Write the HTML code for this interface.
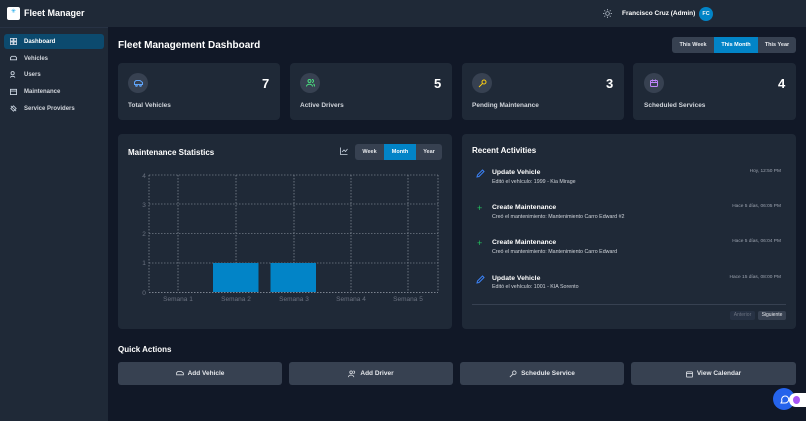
<!DOCTYPE html>
<html><head><meta charset="utf-8"><style>
*{box-sizing:border-box;margin:0;padding:0}
body{width:806px;height:421px;overflow:hidden;background:#111827;font-family:"Liberation Sans",sans-serif;color:#f3f4f6;position:relative}
.a{position:absolute}
.side{left:0;top:0;width:108px;height:421px;background:#1f2937}
.top{left:108px;top:0;width:698px;height:27px;background:#1f2937}
.nav{left:4px;width:100px;height:15px;font-size:6px;font-weight:bold;color:#d1d5db;display:flex;align-items:center;padding-left:6px;border-radius:3px}
.nav svg{margin-right:7px}
.card{background:#1f2937;border-radius:4px}
.ic{width:20px;height:20px;border-radius:50%;background:#374151;display:flex;align-items:center;justify-content:center}
.num{font-size:13px;font-weight:bold;color:#fff}
.lab{font-size:6.5px;font-weight:bold;color:#d1d5db}
.seg{display:flex;border-radius:3px;overflow:hidden;background:#374151;font-size:5.5px;font-weight:bold;color:#e5e7eb}
.seg div{display:flex;align-items:center;justify-content:center}
.seg .on{background:#0284c7;color:#fff}
.btn{top:362px;width:164px;height:23px;background:#374151;border-radius:3px;display:flex;align-items:center;justify-content:center;font-size:6.5px;font-weight:bold;color:#e5e7eb}
.btn svg{margin-right:4px}
.act-t{font-size:6.8px;font-weight:bold;color:#fff}
.act-d{font-size:5.3px;color:#d1d5db}
.tm{font-size:4.8px;color:#9ca3af;text-align:right;width:120px}
</style></head><body>
<div class="a side"></div>
<div class="a top"></div>
<div class="a" style="left:7px;top:7px;width:13px;height:13px;background:#fff;border-radius:2px"><div style="margin:3px 4px;width:5px;height:5px;color:#0ea5e9;font-size:6px;line-height:5px">✳</div></div>
<div class="a" style="left:24px;top:8px;font-size:9px;font-weight:bold;color:#fff">Fleet Manager</div>
<div class="a" style="left:0;top:27px;width:108px;height:1px;background:#273244"></div>
<div class="a nav" style="top:34px;background:#0c4a6e;color:#fff"><svg width="7" height="7" viewBox="0 0 8 8" fill="none" stroke="#cbd5e1" stroke-width="1"><rect x=".5" y=".5" width="3" height="3"/><rect x="4.5" y=".5" width="3" height="3"/><rect x=".5" y="4.5" width="3" height="3"/><rect x="4.5" y="4.5" width="3" height="3"/></svg>Dashboard</div>
<div class="a nav" style="top:51px"><svg width="7" height="7" viewBox="0 0 8 8" fill="none" stroke="#cbd5e1"><path d="M.5 5.5V3l1.5-1.5h4L7.5 3v2.5z"/></svg>Vehicles</div>
<div class="a nav" style="top:67px"><svg width="7" height="7" viewBox="0 0 8 8" fill="none" stroke="#cbd5e1"><circle cx="3" cy="2.5" r="1.8"/><path d="M.5 7.5c0-2 5-2 5 0"/></svg>Users</div>
<div class="a nav" style="top:84px"><svg width="7" height="7" viewBox="0 0 8 8" fill="none" stroke="#cbd5e1"><rect x=".5" y="1.5" width="7" height="6"/><path d="M.5 3.5h7"/></svg>Maintenance</div>
<div class="a nav" style="top:101px"><svg width="7" height="7" viewBox="0 0 8 8" fill="none" stroke="#cbd5e1"><path d="M1 1l6 6M1 4l3-3 3 3-3 3z"/></svg>Service Providers</div>

<svg class="a" style="left:603px;top:9px" width="9" height="9" viewBox="0 0 10 10" fill="none" stroke="#cbd5e1" stroke-width=".8"><circle cx="5" cy="5" r="2"/><path d="M5 0v1.5M5 8.5V10M0 5h1.5M8.5 5H10M1.5 1.5l1 1M7.5 7.5l1 1M1.5 8.5l1-1M7.5 2.5l1-1"/></svg>
<div class="a" style="left:622px;top:10px;font-size:6.5px;font-weight:bold;color:#fff">Francisco Cruz (Admin)</div>
<div class="a" style="left:699px;top:7px;width:14px;height:14px;border-radius:50%;background:#0284c7;font-size:5.5px;font-weight:bold;display:flex;align-items:center;justify-content:center">FC</div>

<div class="a" style="left:118px;top:40px;font-size:10px;font-weight:bold;color:#fff">Fleet Management Dashboard</div>
<div class="a seg" style="left:672px;top:37px;height:16px;width:124px"><div style="width:42px">This Week</div><div class="on" style="width:44px">This Month</div><div style="width:38px">This Year</div></div>

<div class="a card" style="left:118px;top:63px;width:162px;height:57px"></div>
<div class="a card" style="left:290px;top:63px;width:162px;height:57px"></div>
<div class="a card" style="left:462px;top:63px;width:162px;height:57px"></div>
<div class="a card" style="left:633px;top:63px;width:163px;height:57px"></div>
<div class="a ic" style="left:128px;top:73px"><svg width="9" height="7" viewBox="0 0 9 7" fill="none" stroke="#60a5fa"><path d="M.5 4.5V2l1.5-1.5h4L8.5 2.5v2z"/><circle cx="2.5" cy="5.5" r=".8"/><circle cx="6.5" cy="5.5" r=".8"/></svg></div>
<div class="a ic" style="left:300px;top:73px"><svg width="9" height="8" viewBox="0 0 9 8" fill="none" stroke="#4ade80"><circle cx="3.5" cy="2" r="1.5"/><path d="M.5 7.5c0-3 6-3 6 0M6 .5a1.5 1.5 0 010 3M7.5 5c1 .5 1 1.5 1 2.5"/></svg></div>
<div class="a ic" style="left:472px;top:73px"><svg width="9" height="9" viewBox="0 0 9 9" fill="none" stroke="#facc15"><circle cx="6" cy="3" r="2"/><path d="M4.5 4.5L1 8"/></svg></div>
<div class="a ic" style="left:644px;top:73px"><svg width="8" height="8" viewBox="0 0 8 8" fill="none" stroke="#c084fc"><rect x=".5" y="1.5" width="7" height="6" rx="1"/><path d="M.5 3.5h7M2.5.5v2M5.5.5v2"/></svg></div>
<div class="a num" style="left:262px;top:76px">7</div>
<div class="a num" style="left:434px;top:76px">5</div>
<div class="a num" style="left:606px;top:76px">3</div>
<div class="a num" style="left:778px;top:76px">4</div>
<div class="a lab" style="left:128px;top:102px">Total Vehicles</div>
<div class="a lab" style="left:300px;top:102px">Active Drivers</div>
<div class="a lab" style="left:472px;top:102px">Pending Maintenance</div>
<div class="a lab" style="left:644px;top:102px">Scheduled Services</div>

<div class="a card" style="left:118px;top:134px;width:334px;height:195px"></div>
<div class="a" style="left:128px;top:148px;font-size:8px;font-weight:bold;color:#fff">Maintenance Statistics</div>
<svg class="a" style="left:340px;top:147px" width="8" height="8" viewBox="0 0 8 8" fill="none" stroke="#cbd5e1" stroke-width=".8"><path d="M.5 .5v7h7M2 5l2-2 1.5 1.5L7.5 2"/></svg>
<div class="a seg" style="left:355px;top:144px;height:16px;width:87px"><div style="width:29px">Week</div><div class="on" style="width:32px">Month</div><div style="width:26px">Year</div></div>
<svg class="a" style="left:118px;top:134px" width="334" height="195">
<g stroke="#9ca3af" stroke-width=".6" stroke-dasharray="1.5 1.5" fill="none">
<path d="M31 41H320M31 70H320M31 99.5H320M31 129H320M31 41V158M60 41V158M118 41V158M176 41V158M233 41V158M290 41V158M320 41V158"/>
</g>
<path d="M31 158.5H320" stroke="#9ca3af" stroke-width=".8" stroke-dasharray="1.5 1.5"/>
<rect x="95" y="129" width="45.5" height="29" fill="#0284c7"/>
<rect x="152.5" y="129" width="45.5" height="29" fill="#0284c7"/>
<g fill="#6b7280" font-family="Liberation Sans" font-size="6.5" text-anchor="middle">
<text x="26" y="44">4</text><text x="26" y="73">3</text><text x="26" y="102">2</text><text x="26" y="131">1</text><text x="26" y="161">0</text>
<text x="60" y="167">Semana 1</text><text x="118" y="167">Semana 2</text><text x="176" y="167">Semana 3</text><text x="233" y="167">Semana 4</text><text x="290" y="167">Semana 5</text>
</g></svg>

<div class="a card" style="left:462px;top:134px;width:334px;height:195px"></div>
<div class="a" style="left:472px;top:146px;font-size:8px;font-weight:bold;color:#fff">Recent Activities</div>
<svg class="a" style="left:476px;top:169px" width="9" height="9" viewBox="0 0 9 9" fill="none" stroke="#3b82f6" stroke-width="1"><path d="M1 8l.5-2L6.5 1l1.5 1.5L3 7.5z"/></svg>
<div class="a act-t" style="left:492px;top:169px">Update Vehicle</div>
<div class="a act-d" style="left:492px;top:179px">Editó el vehículo: 1999 - Kia Mirage</div>
<div class="a tm" style="left:661px;top:169px">Hoy, 12:50 PM</div>
<div class="a" style="left:477px;top:203px;font-size:9px;color:#22c55e">+</div>
<div class="a act-t" style="left:492px;top:204px">Create Maintenance</div>
<div class="a act-d" style="left:492px;top:214px">Creó el mantenimiento: Mantenimiento Carro Edward #2</div>
<div class="a tm" style="left:661px;top:204px">Hace 5 días, 06:05 PM</div>
<div class="a" style="left:477px;top:238px;font-size:9px;color:#22c55e">+</div>
<div class="a act-t" style="left:492px;top:239px">Create Maintenance</div>
<div class="a act-d" style="left:492px;top:249px">Creó el mantenimiento: Mantenimiento Carro Edward</div>
<div class="a tm" style="left:661px;top:239px">Hace 5 días, 06:04 PM</div>
<svg class="a" style="left:476px;top:275px" width="9" height="9" viewBox="0 0 9 9" fill="none" stroke="#3b82f6" stroke-width="1"><path d="M1 8l.5-2L6.5 1l1.5 1.5L3 7.5z"/></svg>
<div class="a act-t" style="left:492px;top:275px">Update Vehicle</div>
<div class="a act-d" style="left:492px;top:284px">Editó el vehículo: 1001 - KIA Sorento</div>
<div class="a tm" style="left:661px;top:275px">Hace 15 días, 08:00 PM</div>
<div class="a" style="left:472px;top:304px;width:314px;height:1px;background:#374151"></div>
<div class="a" style="left:730px;top:311px;width:25px;height:9px;background:#273244;border-radius:2px;font-size:5px;color:#6b7280;text-align:center;line-height:9px">Anterior</div>
<div class="a" style="left:758px;top:311px;width:28px;height:9px;background:#374151;border-radius:2px;font-size:5px;color:#e5e7eb;text-align:center;line-height:9px">Siguiente</div>

<div class="a" style="left:118px;top:345px;font-size:8px;font-weight:bold;color:#fff">Quick Actions</div>
<div class="a btn" style="left:118px"><svg width="8" height="6" viewBox="0 0 9 7" fill="none" stroke="#d1d5db"><path d="M.5 4.5V2l1.5-1.5h4L8.5 2.5v2z"/></svg>Add Vehicle</div>
<div class="a btn" style="left:289px"><svg width="8" height="8" viewBox="0 0 9 8" fill="none" stroke="#d1d5db"><circle cx="3.5" cy="2" r="1.5"/><path d="M.5 7.5c0-3 6-3 6 0M6 .5a1.5 1.5 0 010 3"/></svg>Add Driver</div>
<div class="a btn" style="left:460px"><svg width="8" height="8" viewBox="0 0 9 9" fill="none" stroke="#d1d5db"><circle cx="6" cy="3" r="2"/><path d="M4.5 4.5L1 8"/></svg>Schedule Service</div>
<div class="a btn" style="left:631px;width:165px"><svg width="7" height="8" viewBox="0 0 8 8" fill="none" stroke="#d1d5db"><rect x=".5" y="1.5" width="7" height="6" rx="1"/><path d="M.5 3.5h7"/></svg>View Calendar</div>

<div class="a" style="left:773px;top:388px;width:22px;height:22px;border-radius:50%;background:#2563eb;display:flex;align-items:center;justify-content:center"><svg width="9" height="9" viewBox="0 0 9 9" fill="none" stroke="#fff"><path d="M1 8l1-2a3.5 3.5 0 113 2z"/></svg></div>
<div class="a" style="left:789px;top:393px;width:17px;height:14px;border-radius:7px 0 0 7px;background:#fff"><div style="margin:3px 4px;width:7px;height:8px;border-radius:50%;background:#a855f7"></div></div>
</body></html>
